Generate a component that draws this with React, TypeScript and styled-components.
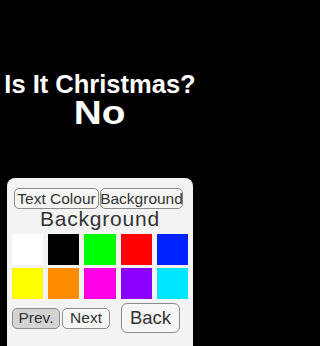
import React from "react";
import styled, { createGlobalStyle } from "styled-components";

const GlobalStyle = createGlobalStyle`
  html, body {
    margin: 0;
    padding: 0;
    background: #000000;
  }
  body {
    font-family: "Liberation Sans", Arial, sans-serif;
  }
`;

const Page = styled.div`
  width: 200px;
  height: 346px;
  background: #000000;
  display: flex;
  flex-direction: column;
  overflow: hidden;
`;

const Header = styled.div`
  height: 178px;
  padding-top: 72px;
  box-sizing: border-box;
  display: flex;
  flex-direction: column;
  align-items: center;
  color: #ffffff;
  font-weight: bold;
`;

const Question = styled.div`
  font-size: 25.5px;
  line-height: 24px;
  white-space: nowrap;
`;

const Answer = styled.div`
  font-size: 34px;
  line-height: 30px;
  margin-top: 1px;
  transform: scaleX(1.14);
`;

const Panel = styled.div`
  flex: 1;
  margin: 0 7px;
  background: #f3f3f3;
  border-radius: 8px 8px 0 0;
  padding: 10px 5px 0 5px;
  display: flex;
  flex-direction: column;
  color: #333333;
`;

const Tabs = styled.div`
  display: flex;
  gap: 1px;
  padding-left: 2px;
`;

const Button = styled.div<{ $w: number; $h: number; $size: number; $pressed?: boolean }>`
  width: ${(p) => p.$w}px;
  height: ${(p) => p.$h}px;
  box-sizing: border-box;
  border: 1px solid #8c8c8c;
  border-radius: ${(p) => (p.$h > 25 ? 6 : 5)}px;
  background: ${(p) => (p.$pressed ? "#d3d3d3" : "#f6f6f6")};
  font-size: ${(p) => p.$size}px;
  display: flex;
  align-items: center;
  justify-content: center;
  white-space: nowrap;
  color: #333333;
`;

const Heading = styled.div`
  font-size: 21px;
  line-height: 20px;
  letter-spacing: 0.8px;
  text-align: center;
`;

const Swatches = styled.div`
  margin-top: 5px;
  display: grid;
  grid-template-columns: repeat(5, 1fr);
  grid-auto-rows: 31px;
  column-gap: 5px;
  row-gap: 3px;
`;

const Swatch = styled.div<{ $c: string }>`
  background: ${(p) => p.$c};
`;

const Controls = styled.div`
  margin-top: 4px;
  display: flex;
  align-items: center;
  gap: 2px;
`;

const BackSlot = styled.div`
  margin-left: 9px;
`;

const colours = [
  "#ffffff",
  "#000000",
  "#00ff00",
  "#ff0000",
  "#0022ff",
  "#ffff00",
  "#ff8c00",
  "#ff00e6",
  "#8c00ff",
  "#00e6ff",
];

function App() {
  return (
    <Page>
      <GlobalStyle />
      <Header>
        <Question>Is It Christmas?</Question>
        <Answer>No</Answer>
      </Header>
      <Panel>
        <Tabs>
          <Button $w={85} $h={21} $size={15.5}>
            Text Colour
          </Button>
          <Button $w={83} $h={21} $size={15.5}>
            Background
          </Button>
        </Tabs>
        <Heading>Background</Heading>
        <Swatches>
          {colours.map((c) => (
            <Swatch key={c} $c={c} />
          ))}
        </Swatches>
        <Controls>
          <Button $w={48} $h={21} $size={15.5} $pressed>
            Prev.
          </Button>
          <Button $w={48} $h={21} $size={15.5}>
            Next
          </Button>
          <BackSlot>
            <Button $w={59} $h={30} $size={18.5}>
              Back
            </Button>
          </BackSlot>
        </Controls>
      </Panel>
    </Page>
  );
}

export default App;
